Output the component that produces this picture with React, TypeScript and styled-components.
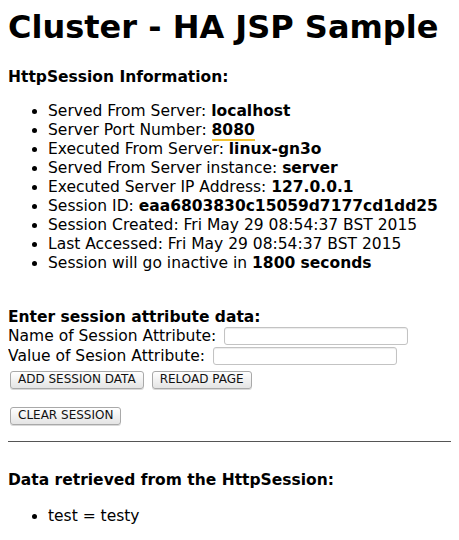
import { createGlobalStyle, styled } from 'styled-components';

const GlobalStyle = createGlobalStyle`
  body {
    margin: 8px;
    background: #ffffff;
    color: #000000;
    font-family: 'DejaVu Sans', Verdana, sans-serif;
    font-size: 15.5px;
  }
`;

const Title = styled.h1`
  font-size: 32px;
  font-weight: bold;
  margin: 0 0 22px;
  line-height: 38px;
`;

const SectionTitle = styled.h3<{ $top?: number }>`
  font-size: 15.5px;
  font-weight: bold;
  margin: ${(p) => p.$top ?? 0}px 0 0;
  line-height: 18px;
`;

const InfoList = styled.ul`
  margin: 16px 0 0;
  padding-left: 40px;
  line-height: 19px;
`;

const Value = styled.b``;

const Marked = styled.b`
  border-bottom: 2px solid #f2c230;
`;

const Form = styled.form`
  display: flex;
  flex-direction: column;
  margin-top: 35px;
`;

const FieldRow = styled.label`
  display: flex;
  align-items: center;
  gap: 8px;
  line-height: 20px;
`;

const TextInput = styled.input`
  width: 178px;
  height: 14px;
  padding: 1px 2px;
  border: 1px solid #c3c3c3;
  border-radius: 3px;
  box-shadow: inset 0 1px 1px rgba(0, 0, 0, 0.08);
`;

const ButtonRow = styled.div<{ $top?: number }>`
  display: flex;
  gap: 8px;
  margin-top: ${(p) => p.$top ?? 0}px;
  padding-left: 2px;
`;

const Button = styled.button`
  font-family: 'DejaVu Sans', Verdana, sans-serif;
  font-size: 12px;
  line-height: 13px;
  padding: 1px 7px 2px;
  border: 1px solid #a9a9a9;
  border-radius: 3px;
  background: linear-gradient(#ffffff, #e4e4e4);
  box-shadow: 0 1px 0 rgba(0, 0, 0, 0.15);
  color: #111;
`;

const Rule = styled.hr`
  margin: 16px -8px 0 0;
  border: 0;
  border-top: 1px solid #555;
`;

const DataList = styled.ul`
  margin: 18px 0 0;
  padding-left: 40px;
  line-height: 19px;
`;

export default function App() {
  return (
    <>
      <GlobalStyle />
      <Title>Cluster - HA JSP Sample</Title>
      <SectionTitle>HttpSession Information:</SectionTitle>
      <InfoList>
        <li>
          Served From Server: <Value>localhost</Value>
        </li>
        <li>
          Server Port Number: <Marked>8080</Marked>
        </li>
        <li>
          Executed From Server: <Value>linux-gn3o</Value>
        </li>
        <li>
          Served From Server instance: <Value>server</Value>
        </li>
        <li>
          Executed Server IP Address: <Value>127.0.0.1</Value>
        </li>
        <li>
          Session ID: <Value>eaa6803830c15059d7177cd1dd25</Value>
        </li>
        <li>Session Created: Fri May 29 08:54:37 BST 2015</li>
        <li>Last Accessed: Fri May 29 08:54:37 BST 2015</li>
        <li>
          Session will go inactive in <Value>1800 seconds</Value>
        </li>
      </InfoList>
      <Form>
        <SectionTitle>Enter session attribute data:</SectionTitle>
        <FieldRow>
          Name of Session Attribute: <TextInput type="text" name="dataName" />
        </FieldRow>
        <FieldRow>
          Value of Sesion Attribute: <TextInput type="text" name="dataValue" />
        </FieldRow>
        <ButtonRow $top={5}>
          <Button type="button">ADD SESSION DATA</Button>
          <Button type="button">RELOAD PAGE</Button>
        </ButtonRow>
        <ButtonRow $top={18}>
          <Button type="button">CLEAR SESSION</Button>
        </ButtonRow>
      </Form>
      <Rule />
      <SectionTitle $top={29}>Data retrieved from the HttpSession:</SectionTitle>
      <DataList>
        <li>test = testy</li>
      </DataList>
    </>
  );
}
